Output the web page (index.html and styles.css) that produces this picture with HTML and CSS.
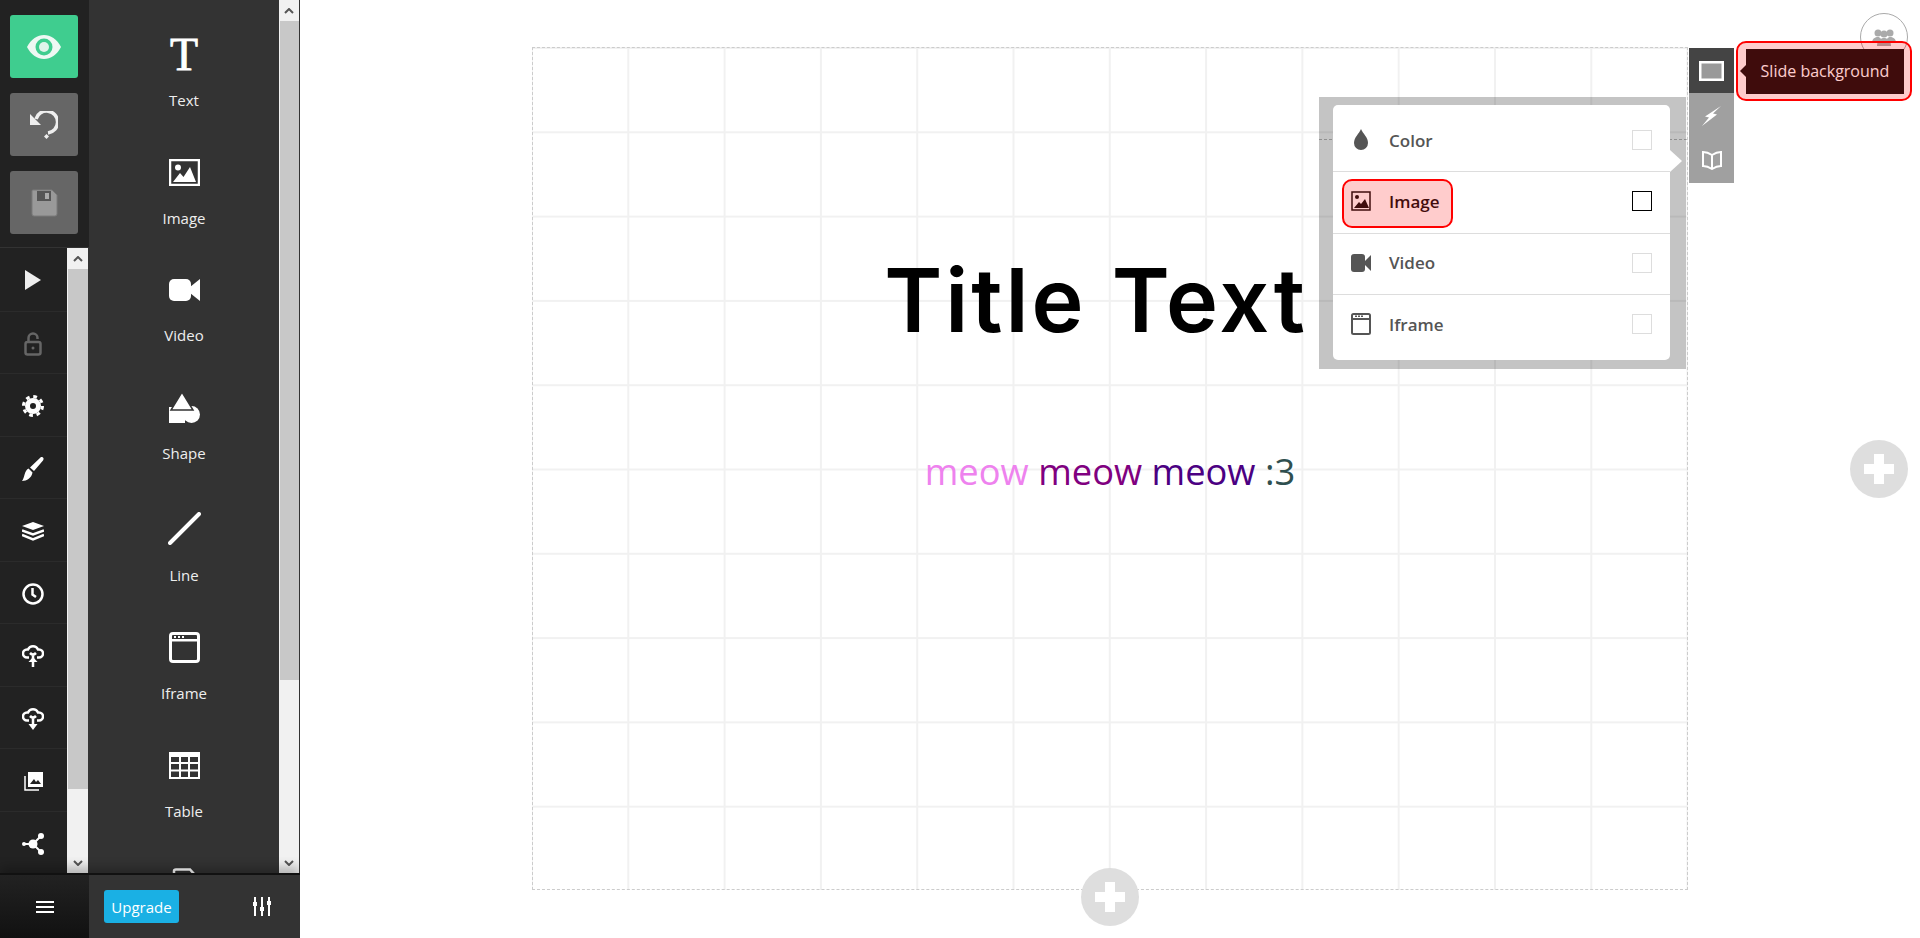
FILE: index.html
```html
<!doctype html>
<html lang="en">
<head>
	<meta charset="utf-8">
	<title>Slide editor</title>
	<link rel="stylesheet" href="styles.css">
</head>
<body>
	<div class="sidebar">
		<div class="rail">
			<div class="actions">
				<button class="action action-green">
					<svg width="34" height="26" viewBox="0 0 34 26"><path fill="#eef8f3" d="M0 13C8 -3 26 -3 34 13C26 29 8 29 0 13Z"/><circle cx="17" cy="13" r="8.5" fill="#3fcd8f"/><circle cx="17" cy="13" r="5" fill="#dff4ea"/></svg>
				</button>
				<button class="action">
					<svg width="28" height="28" viewBox="0 0 28 28"><path fill="none" stroke="#eee" stroke-width="3.500" d="M6 8A11 11 0 1 1 18 22"/><path fill="#eee" d="M0 3V14H11Z"/><path fill="#eee" d="M16.500 23L19 25.500L16.500 28L14 25.500Z"/></svg>
				</button>
				<button class="action">
					<svg width="27" height="28" viewBox="0 0 27 28"><path fill="#999" stroke="#7a7a7a" d="M2 1H21L26 6V25Q26 27 24 27H3Q1 27 1 25V2Q1 1 2 1Z"/><path fill="#555" d="M6 2H20V12H6Z"/><path fill="#aaa" d="M14 4H18V10H14Z"/></svg>
				</button>
			</div>
			<div class="rail-scroll">
				<ul class="rail-list">
					<li><svg width="16" height="20" viewBox="0 0 16 20"><path fill="#eee" d="M0 0L16 10L0 20Z"/></svg></li>
					<li><svg width="18" height="24" viewBox="0 0 18 24"><g fill="none" stroke="#666" stroke-width="2.500"><rect x="1.500" y="10" width="15" height="12.500" rx="2"/><path d="M4.500 10V6A4.500 4.500 0 0 1 13.500 6V7"/></g><circle cx="9" cy="16" r="1.500" fill="#666"/></svg></li>
					<li><svg width="22" height="22" viewBox="0 0 22 22"><circle cx="11" cy="11" r="5.500" fill="none" stroke="#fff" stroke-width="5"/><circle cx="11" cy="11" r="9.500" fill="none" stroke="#fff" stroke-width="3" stroke-dasharray="3.730"/></svg></li>
					<li><svg width="22" height="24" viewBox="0 0 22 24"><path fill="#fff" d="M19 0C22 0 22 2 21 3.500L12 14L8 10.500ZM6.500 11.500L10.500 15.500C9.500 21 5 24 0 24C3 20 2 14 6.500 11.500Z"/></svg></li>
					<li><svg width="22" height="19" viewBox="0 0 22 19"><path fill="#fff" d="M11 0L22 4L11 8L0 4Z"/><path fill="none" stroke="#fff" stroke-width="2.500" d="M0 8.500L11 12.500L22 8.500M0 13L11 17.500L22 13"/></svg></li>
					<li><svg width="22" height="22" viewBox="0 0 22 22"><circle cx="11" cy="11" r="9.500" fill="none" stroke="#fff" stroke-width="2.500"/><path fill="none" stroke="#fff" stroke-width="2.500" d="M10.500 5V11.500L14 14"/></svg></li>
					<li><svg width="22" height="22" viewBox="0 0 22 22"><g fill="none" stroke="#fff" stroke-width="2.500"><path d="M7 12.500H5A4 4 0 0 1 5 4.500H6A5.500 5.500 0 0 1 16 4.500H17A4 4 0 0 1 17 12.500H15"/><path d="M11 22V9M8 8Q11 11 14 8"/></g><path fill="#fff" d="M11 12L15.500 17H6.500Z"/></svg></li>
					<li><svg width="22" height="22" viewBox="0 0 22 22"><g fill="none" stroke="#fff" stroke-width="2.500"><path d="M7 12.500H5A4 4 0 0 1 5 4.500H6A5.500 5.500 0 0 1 16 4.500H17A4 4 0 0 1 17 12.500H15"/><path d="M11 16V9M8 8Q11 11 14 8"/></g><path fill="#fff" d="M11 22L15.500 16H6.500Z"/></svg></li>
					<li><svg width="19" height="19" viewBox="0 0 19 19"><path fill="none" stroke="#fff" stroke-width="1.500" d="M1 4V18H15"/><path fill="#fff" d="M4 0H19V15H4Z"/><path fill="#222" d="M6 12L10 7L12 10L14 8L17 12Z"/></svg></li>
					<li><svg width="22" height="22" viewBox="0 0 22 22"><path stroke="#fff" stroke-width="2" d="M11 11L19 3M11 11L19 19M11 11H2"/><circle cx="11" cy="11" r="4.500" fill="#fff"/><circle cx="19" cy="3" r="3" fill="#fff"/><circle cx="19" cy="19" r="3" fill="#fff"/><circle cx="2" cy="11" r="2" fill="#fff"/></svg></li>
				</ul>
				<div class="scrollbar">
					<div class="scroll-btn"><svg width="10" height="6" viewBox="0 0 10 6"><path fill="none" stroke="#555" stroke-width="2" d="M1 5L5 1L9 5"/></svg></div>
					<div class="scroll-thumb rail-thumb"></div>
					<div class="scroll-track"></div>
					<div class="scroll-btn"><svg width="10" height="6" viewBox="0 0 10 6"><path fill="none" stroke="#555" stroke-width="2" d="M1 1L5 5L9 1"/></svg></div>
				</div>
			</div>
		</div>
		<div class="panel">
			<div class="tools">
				<div class="tool"><div class="tool-icon"><span class="glyph-t">T</span></div><div class="tool-name">Text</div></div>
				<div class="tool"><div class="tool-icon"><svg width="31" height="27" viewBox="0 0 31 27"><rect x="1" y="1" width="29" height="25" fill="none" stroke="#fff" stroke-width="2.500"/><circle cx="9" cy="8.500" r="3" fill="#fff"/><path fill="#fff" d="M4 23L11 14L14.500 18L21 8L27 23Z"/></svg></div><div class="tool-name">Image</div></div>
				<div class="tool"><div class="tool-icon"><svg width="31" height="22" viewBox="0 0 31 22"><rect x="0" y="0" width="22" height="22" rx="5" fill="#fff"/><path fill="#fff" d="M21 8L31 0V22L21 14Z"/></svg></div><div class="tool-name">Video</div></div>
				<div class="tool tool-shape"><div class="tool-icon"><svg width="31" height="31" viewBox="0 0 31 31"><rect x="0" y="15" width="16" height="16" fill="#fff"/><circle cx="22.500" cy="22.500" r="8.500" fill="#fff"/><path fill="#fff" stroke="#333" stroke-width="1.500" d="M13 0L24 18H2Z"/></svg></div><div class="tool-name">Shape</div></div>
				<div class="tool"><div class="tool-icon tool-icon-line"><svg width="33" height="33" viewBox="0 0 33 33"><path stroke="#fff" stroke-width="4" stroke-linecap="round" d="M2 31L31 2"/></svg></div><div class="tool-name">Line</div></div>
				<div class="tool"><div class="tool-icon"><svg width="31" height="31" viewBox="0 0 31 31"><rect x="1.500" y="1.500" width="28" height="28" rx="2.500" fill="none" stroke="#fff" stroke-width="3"/><path fill="#fff" d="M2 7H29V9.500H2Z"/><path fill="#fff" d="M5 4H7V6H5ZM9 4H11V6H9ZM13 4H15V6H13Z"/></svg></div><div class="tool-name">Iframe</div></div>
				<div class="tool"><div class="tool-icon"><svg width="31" height="27" viewBox="0 0 31 27"><path fill="#fff" d="M0 0H31V5H0Z"/><path fill="none" stroke="#fff" stroke-width="2" d="M1 1H30V26H1ZM1 11H30M1 18.500H30M11 4V26M20 4V26"/></svg></div><div class="tool-name">Table</div></div>
				<div class="tool"><div class="tool-icon"><svg width="24" height="31" viewBox="0 0 24 31"><path fill="none" stroke="#fff" stroke-width="2.500" d="M2 30V3Q2 1.500 4 1.500H18L23 7V30"/></svg></div></div>
			</div>
			<div class="scrollbar">
				<div class="scroll-btn"><svg width="10" height="6" viewBox="0 0 10 6"><path fill="none" stroke="#555" stroke-width="2" d="M1 5L5 1L9 5"/></svg></div>
				<div class="scroll-thumb panel-thumb"></div>
				<div class="scroll-track"></div>
				<div class="scroll-btn"><svg width="10" height="6" viewBox="0 0 10 6"><path fill="none" stroke="#555" stroke-width="2" d="M1 1L5 5L9 1"/></svg></div>
			</div>
		</div>
		<div class="bottom">
			<div class="bottom-menu"><span class="burger"></span></div>
			<div class="bottom-tools">
				<button class="upgrade">Upgrade</button>
				<svg width="20" height="19" viewBox="0 0 20 19"><path stroke="#fff" stroke-width="2" d="M3 0V19M10 0V19M17 0V19"/><path stroke="#fff" stroke-width="4" d="M1 7H5M8 12H12M15 6H19"/></svg>
			</div>
		</div>
	</div>

	<div class="stage">
		<div class="slide">
			<div class="guide"></div>
			<h1 class="slide-title">Title Text</h1>
			<p class="slide-sub"><span class="c-violet">meow</span> <span class="c-purple">meow</span> <span class="c-indigo">meow</span> <span class="c-slate">:3</span></p>
		</div>
		<div class="add add-bottom"></div>
		<div class="add add-right"></div>

		<div class="avatar">
			<svg width="24" height="18" viewBox="0 0 24 18"><g fill="#aaa"><circle cx="6" cy="5" r="3.500"/><circle cx="18" cy="5" r="3.500"/><path d="M0 14C1 9 5 9 6 9C7 9 8 9.500 9 11V15H1Z"/><path d="M24 14C23 9 19 9 18 9C17 9 16 9.500 15 11V15H23Z"/><circle cx="12" cy="6" r="3.500"/><path d="M5 18C5 12 9 10 12 10C15 10 19 12 19 18Z"/></g></svg>
		</div>

		<div class="popup">
			<ul class="bg-menu">
				<li class="bg-row">
					<svg class="bg-icon" width="20" height="22" viewBox="0 0 20 22"><path fill="#555" d="M10 0C12 5 17 8 17 14A7 7 0 0 1 3 14C3 8 8 5 10 0Z"/></svg>
					<span class="bg-name">Color</span><span class="check"></span>
				</li>
				<li class="bg-row is-hover">
					<svg class="bg-icon" width="20" height="20" viewBox="0 0 20 20"><rect x="1" y="1" width="18" height="18" fill="none" stroke="currentColor" stroke-width="1.500"/><circle cx="6" cy="6" r="2" fill="currentColor"/><path fill="currentColor" d="M3 17L8 11L10 13L14 8L18 17Z"/></svg>
					<span class="bg-name">Image</span><span class="check"></span>
				</li>
				<li class="bg-row">
					<svg class="bg-icon" width="20" height="18" viewBox="0 0 20 18"><rect x="0" y="0" width="14" height="18" rx="3" fill="#555"/><path fill="#555" d="M14 7L20 1V17L14 11Z"/></svg>
					<span class="bg-name">Video</span><span class="check"></span>
				</li>
				<li class="bg-row">
					<svg class="bg-icon" width="20" height="22" viewBox="0 0 20 22"><rect x="1" y="1" width="18" height="20" rx="1.500" fill="none" stroke="#555" stroke-width="2"/><path fill="#555" d="M2 5H18V7H2Z"/><path fill="#555" d="M4 2.500H6V4H4ZM7 2.500H9V4H7ZM10 2.500H12V4H10Z"/></svg>
					<span class="bg-name">Iframe</span><span class="check"></span>
				</li>
			</ul>
		</div>

		<div class="tabs">
			<div class="tab tab-on"><svg width="25" height="20" viewBox="0 0 25 20"><rect x="1.250" y="1.250" width="22.500" height="17.500" fill="#999" stroke="#fff" stroke-width="2.500"/></svg></div>
			<div class="tab"><svg width="19" height="20" viewBox="0 0 19 20"><path fill="#fff" d="M19 0L11 7.500L15 8.500L0 20L7 11.500L3 10.500Z"/></svg></div>
			<div class="tab"><svg width="20" height="19" viewBox="0 0 20 19"><path fill="none" stroke="#fff" stroke-width="2" d="M10 4C7 2 4 1 1 1V15C4 15 7 16 10 18C13 16 16 15 19 15V1C16 1 13 2 10 4V18"/></svg></div>
		</div>

		<div class="tooltip">Slide background</div>

		<div class="mark mark-tooltip"></div>
		<div class="mark mark-image"></div>
	</div>
</body>
</html>
```

FILE: styles.css
```css
html, body {
	height: 100%;
}

body {
	margin: 0;
	display: flex;
	overflow: hidden;
	background: #fff;
	font-family: "Open Sans", sans-serif;
}

ul {
	list-style: none;
	margin: 0;
	padding: 0;
}

button {
	border: 0;
	padding: 0;
	font: inherit;
}

/* left side */
.sidebar {
	width: 300px;
	height: 938px;
	flex: none;
	display: grid;
	grid-template-columns: 89px 211px;
	grid-template-rows: 873px 65px;
}

.rail {
	background: #222;
	display: flex;
	flex-direction: column;
	min-height: 0;
}

.actions {
	height: 248px;
	box-sizing: border-box;
	padding: 15px 11px 0 10px;
	display: flex;
	flex-direction: column;
	gap: 15px;
	border-bottom: 1px solid #333;
}

.action {
	height: 63px;
	background: #666;
	border-radius: 3px;
	display: flex;
	align-items: center;
	justify-content: center;
}

.action-green {
	background: #3fcd8f;
}

.rail-scroll {
	flex: 1;
	display: flex;
	min-height: 0;
}

.rail-list {
	width: 67px;
	display: grid;
	grid-auto-rows: 1fr;
}

.rail-list li {
	box-sizing: border-box;
	padding: 3px 1px 0 0;
	display: flex;
	align-items: center;
	justify-content: center;
	border-top: 1px solid #2b2b2b;
}

.rail-list li:first-child {
	border-top: 0;
	padding-top: 1px;
}

.scrollbar {
	width: 21px;
	flex: none;
	display: flex;
	flex-direction: column;
	background: #f1f1f1;
}

.rail-scroll .scrollbar {
	border-right: 1px solid #333;
}

.scroll-btn {
	height: 21px;
	flex: none;
	display: flex;
	align-items: center;
	justify-content: center;
}

.scroll-thumb {
	background: #c8c8c8;
	margin: 0 0 0 1px;
}

.rail-thumb {
	height: 520px;
}

.panel-thumb {
	height: 659px;
}

.scroll-track {
	flex: 1;
}

.panel {
	background: #333;
	display: flex;
	min-height: 0;
	overflow: hidden;
}

.tools {
	width: 190px;
	flex: none;
	box-sizing: border-box;
	padding-top: 33px;
	display: flex;
	flex-direction: column;
	align-items: center;
	gap: 39.6px;
	overflow: hidden;
}

.panel .scrollbar {
	width: 20px;
}

.tool {
	width: 100%;
	flex: none;
	display: flex;
	flex-direction: column;
	align-items: center;
	gap: 12px;
}

.tool-shape {
	margin-bottom: 5px;
}

.tool-icon {
	height: 44px;
	display: flex;
	align-items: center;
	justify-content: center;
}

.tool-icon-line {
	padding-bottom: 4px;
	height: 40px;
}

.glyph-t {
	font-family: "Liberation Serif", serif;
	font-size: 46px;
	line-height: 44px;
	color: #fff;
	-webkit-text-stroke: 0.8px #fff;
}

.tool-name {
	font-size: 15px;
	line-height: 22px;
	color: #eee;
}

.bottom {
	grid-column: 1 / 3;
	display: flex;
	border-top: 2px solid #111;
	box-shadow: 0 -6px 10px rgba(0,0,0,0.25);
	clip-path: inset(-16px 0 0 0);
	z-index: 2;
}

.bottom-menu {
	width: 89px;
	background: linear-gradient(#222, #111);
	display: flex;
	align-items: center;
	justify-content: center;
}

.burger {
	width: 18px;
	height: 2px;
	background: #fff;
	box-shadow: 0 5px 0 #fff, 0 -5px 0 #fff;
}

.bottom-tools {
	flex: 1;
	background: #333;
	display: flex;
	align-items: center;
	justify-content: space-between;
	padding: 0 28px 0 15px;
}

.upgrade {
	width: 75px;
	height: 33px;
	background: #1ab0e4;
	border-radius: 3px;
	color: #fff;
	font-size: 15px;
}

/* the slide */
.stage {
	flex: 1;
	position: relative;
}

.slide {
	position: absolute;
	left: 232px;
	top: 47px;
	width: 1156px;
	height: 843px;
	box-sizing: border-box;
	border: 1px dashed #ccc;
	text-align: center;
	background-image:
		linear-gradient(to right, transparent calc(100% - 2px), #f1f1f1 0),
		linear-gradient(to bottom, transparent calc(100% - 2px), #f1f1f1 0);
	background-size: 96.3px 84.3px;
	background-position: 0 1px;
}

.guide {
	position: absolute;
	left: 786px;
	right: 0;
	top: 91px;
	border-top: 1px dashed #bbb;
}

.slide-title {
	margin: 0;
	position: absolute;
	left: 0;
	right: 28px;
	top: 192px;
	font-family: Inter, sans-serif;
	font-size: 88px;
	line-height: 120px;
	font-weight: 600;
	letter-spacing: 3px;
	color: #000;
}

.slide-sub {
	margin: 0;
	position: absolute;
	left: 0;
	right: 0;
	top: 398px;
	font-size: 36.3px;
	line-height: 50px;
}

.c-violet { color: #ee82ee; }
.c-purple { color: #800080; }
.c-indigo { color: #4b0082; }
.c-slate { color: #2f4f4f; }

.add {
	position: absolute;
	width: 58px;
	height: 58px;
	border-radius: 50%;
	background:
		linear-gradient(#fff, #fff) center / 30px 10px no-repeat,
		linear-gradient(#fff, #fff) center / 10px 30px no-repeat,
		#dedede;
}

.add-bottom {
	left: 781px;
	top: 868px;
}

.add-right {
	left: 1550px;
	top: 440px;
}

.avatar {
	position: absolute;
	left: 1560px;
	top: 13px;
	width: 48px;
	height: 48px;
	box-sizing: border-box;
	border: 1px solid #aaa;
	border-radius: 50%;
	display: flex;
	align-items: center;
	justify-content: center;
}

/* background menu */
.popup {
	position: absolute;
	left: 1019px;
	top: 97px;
	width: 367px;
	height: 272px;
	box-sizing: border-box;
	padding: 8px 16px 9px 14px;
	background: rgba(0,0,0,0.23);
	display: flex;
}

.bg-menu {
	flex: 1;
	position: relative;
	background: #fff;
	border-radius: 5px;
	padding: 6px 0 4px;
	display: flex;
	flex-direction: column;
}

.bg-menu::after {
	content: "";
	position: absolute;
	left: 100%;
	top: 45px;
	border-left: 12px solid #fff;
	border-top: 11px solid transparent;
	border-bottom: 11px solid transparent;
}

.bg-row {
	height: 61.3px;
	box-sizing: border-box;
	padding: 0 18px 2px;
	display: flex;
	align-items: center;
	color: #555;
	border-bottom: 1px solid #ddd;
}

.bg-row:last-child {
	border-bottom: 0;
}

.bg-icon {
	flex: none;
	width: 20px;
}

.bg-name {
	margin-left: 18px;
	flex: 1;
	font-size: 17px;
	font-weight: 600;
}

.check {
	width: 20px;
	height: 20px;
	box-sizing: border-box;
	border: 1px solid #ddd;
}

.is-hover {
	color: #111;
}

.is-hover .check {
	border-color: #000;
}

/* right tabs */
.tabs {
	position: absolute;
	left: 1389px;
	top: 48px;
	width: 45px;
	background: #a0a0a0;
}

.tab {
	height: 45px;
	display: flex;
	align-items: center;
	justify-content: center;
}

.tab-on {
	background: #444;
}

.tooltip {
	position: absolute;
	left: 1446px;
	top: 49px;
	width: 158px;
	height: 45px;
	box-sizing: border-box;
	background: #101010;
	color: #fff;
	font-size: 16px;
	line-height: 45px;
	text-align: center;
}

.tooltip::before {
	content: "";
	position: absolute;
	right: 100%;
	top: 16px;
	border-right: 6px solid #101010;
	border-top: 6px solid transparent;
	border-bottom: 6px solid transparent;
}

/* tour marks over the page */
.mark {
	position: absolute;
	box-sizing: border-box;
	background: rgba(255,0,0,0.2);
	border: 2px solid #f00;
}

.mark-tooltip {
	left: 1436px;
	top: 41px;
	width: 176px;
	height: 60px;
	border-radius: 10px;
}

.mark-image {
	left: 1042px;
	top: 179px;
	width: 111px;
	height: 49px;
	border-radius: 10px;
}
```
